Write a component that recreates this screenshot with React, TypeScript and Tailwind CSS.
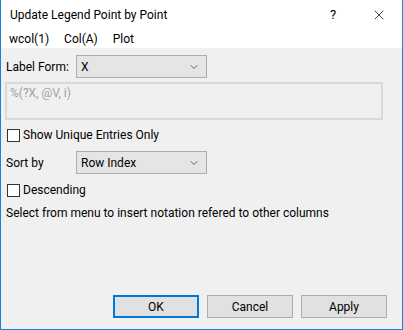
import { ChevronDown, X } from "lucide-react";

function Combo({ value }: { value: string }) {
  return (
    <div className="flex h-[23px] w-[131px] items-center justify-between border border-[#adadad] bg-[#e5e5e5] pl-[4px] pr-[6px]">
      <span>{value}</span>
      <ChevronDown className="h-[12px] w-[12px] text-[#444]" strokeWidth={1.6} />
    </div>
  );
}

function Check({ label }: { label: string }) {
  return (
    <div className="flex items-center gap-[3px]">
      <div className="h-[13px] w-[13px] border border-[#333] bg-white" />
      <span>{label}</span>
    </div>
  );
}

function Btn({ label, primary }: { label: string; primary?: boolean }) {
  return (
    <div
      className={`flex h-[23px] w-[86px] items-center justify-center bg-[#e1e1e1] ${
        primary ? "border-2 border-[#0078d7]" : "border border-[#adadad]"
      }`}
    >
      {label}
    </div>
  );
}

export default function App() {
  return (
    <div
      className="flex h-[330px] w-[403px] flex-col border border-t-0 border-[#1883d7] bg-[#f0f0f0] text-[12px] leading-[16px] text-black"
      style={{ fontFamily: '"Segoe UI", Roboto, "Noto Sans", sans-serif' }}
    >
      <div className="flex h-[30px] items-center bg-white pl-[9px]">
        <span className="flex-1">Update Legend Point by Point</span>
        <span className="w-[46px] text-center text-[13px]">?</span>
        <div className="flex w-[46px] justify-center">
          <X className="h-[16px] w-[16px]" strokeWidth={1.1} />
        </div>
      </div>
      <div className="flex h-[18px] items-center gap-[15px] bg-white pl-[8px]">
        <span>wcol(1)</span>
        <span>Col(A)</span>
        <span>Plot</span>
      </div>

      <div className="flex flex-1 flex-col px-[4px] pt-[7px]">
        <div className="flex items-center">
          <span className="w-[71px] pl-[1px]">Label Form:</span>
          <Combo value="X" />
        </div>
        <div className="mt-[4px] h-[38px] w-[378px] border-2 border-[#d9d9d9] px-[3px] pt-[1px] text-[#a0a0a0]">
          %(?X, @V, i)
        </div>
        <div className="mt-[7px] pl-[2px]">
          <Check label="Show Unique Entries Only" />
        </div>
        <div className="mt-[8px] flex items-center">
          <span className="w-[71px] pl-[1px]">Sort by</span>
          <Combo value="Row Index" />
        </div>
        <div className="mt-[8px] pl-[2px]">
          <Check label="Descending" />
        </div>
        <div className="mt-[7px] pl-[1px]">Select from menu to insert notation refered to other columns</div>

        <div className="mt-auto mb-[11px] flex justify-end gap-[8px] pr-[11px]">
          <Btn label="OK" primary />
          <Btn label="Cancel" />
          <Btn label="Apply" />
        </div>
      </div>
    </div>
  );
}
